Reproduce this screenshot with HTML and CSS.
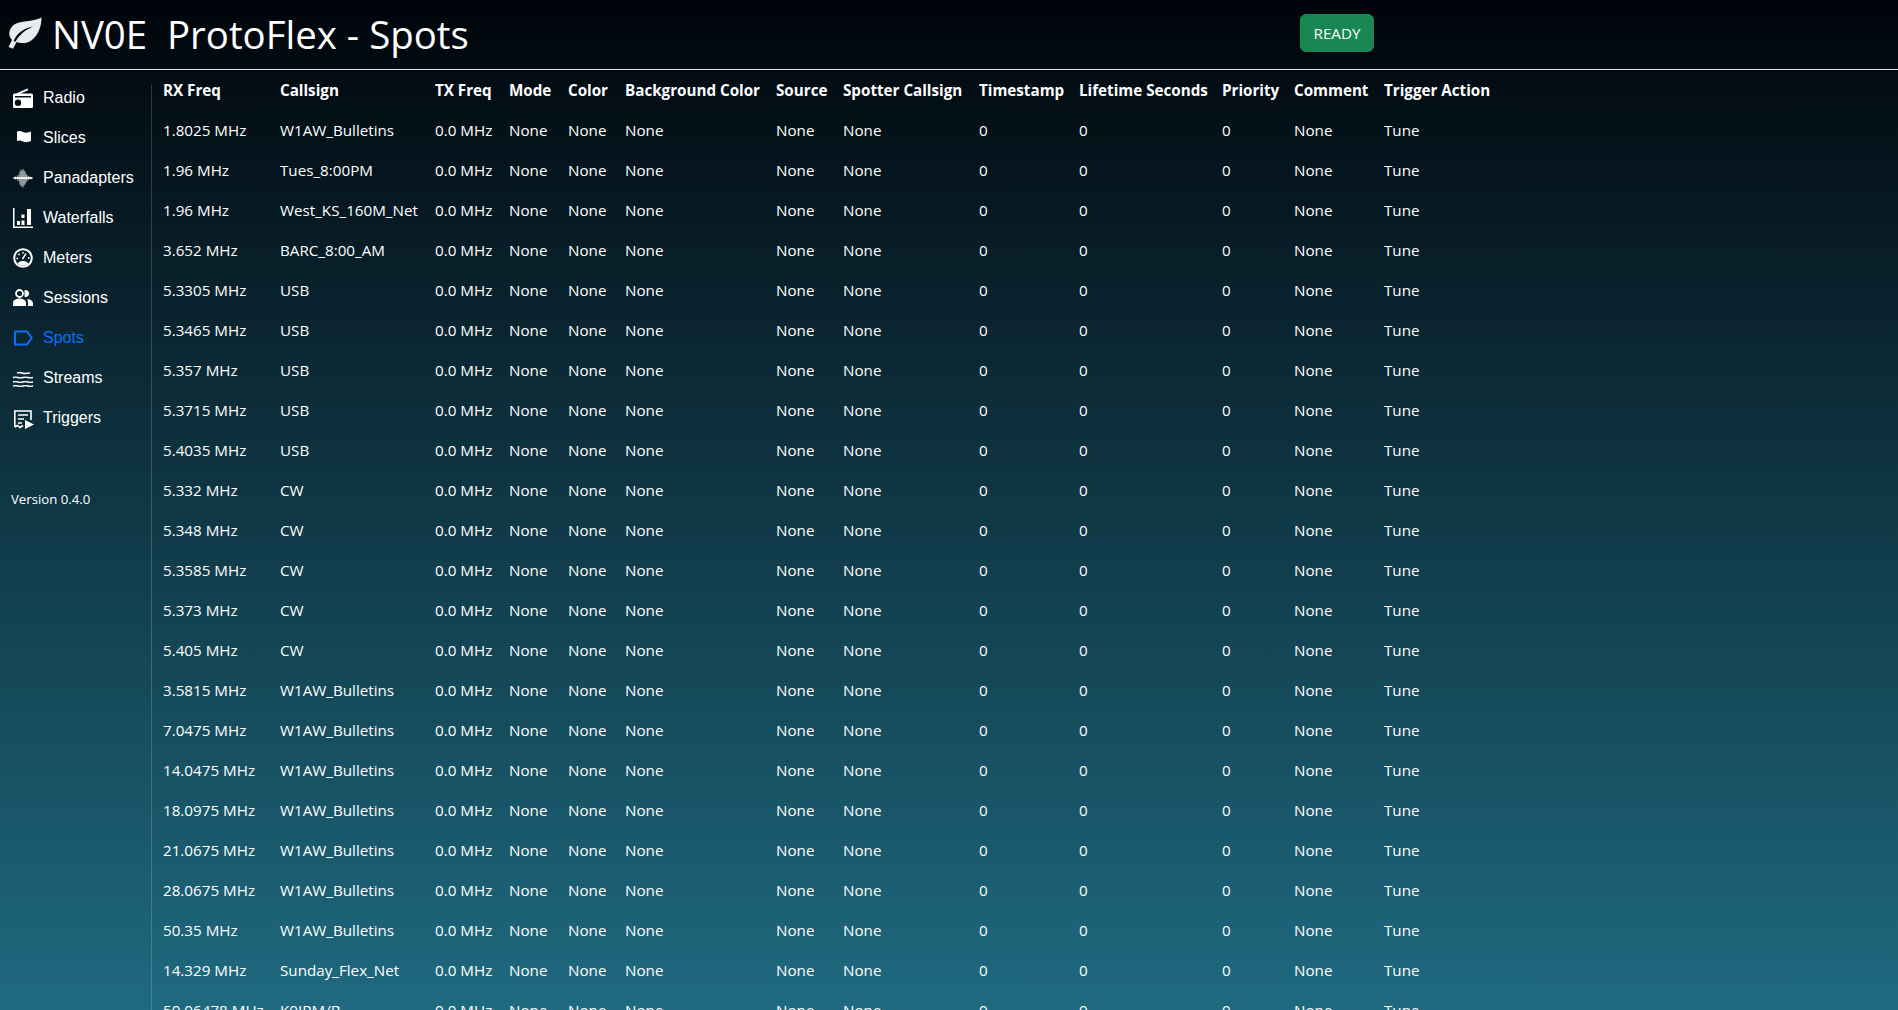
FILE: index.html
```html
<!DOCTYPE html>
<html lang="en">
<head>
<meta charset="utf-8">
<title>NV0E ProtoFlex - Spots</title>
<link rel="stylesheet" href="styles.css">
</head>
<body>
<div class="app">
<header class="topbar">
  <div class="brand">
    <svg class="leaf" viewBox="0 0 34 32"><path fill-rule="evenodd" d="M33.500 0.500C33.500 8 31 18.500 22.500 24C17 27.300 11.500 26 8.500 25L5 31.800L0.500 30L4 23C0 19 0.500 12 5.500 8C12 3 24 5.500 33.500 0.500ZM25 9.500C16.500 11 9.500 15.500 5.500 24L7.500 24.800C11 18 17 13 25 9.500Z" fill="#e9ecef"/></svg>
    <h1 class="title">NV0E&nbsp; ProtoFlex - Spots</h1>
  </div>
  <button class="status">READY</button>
</header>
<div class="body-row">
<nav class="sidebar">
  <ul class="nav-list">
    <li class="nav-item"><svg class="ico" viewBox="0 0 20 20"><path fill="#fff" fill-rule="evenodd" d="M1.500 5.500H3L14.500 0.500L15.200 2.200L7.500 5.500H18.500A1.500 1.500 0 0 1 20 7V18.500A1.500 1.500 0 0 1 18.500 20H1.500A1.500 1.500 0 0 1 0 18.500V7A1.500 1.500 0 0 1 1.500 5.500ZM2 8V9.500H18V8ZM5 11.500A3.200 3.200 0 1 0 5 17.900A3.200 3.200 0 0 0 5 11.500Z"/></svg><span>Radio</span></li>
    <li class="nav-item"><svg class="ico" viewBox="0 0 20 20"><path fill="#fff" d="M4 3.500C6 2.500 8 3 10 4C12 5 14 5 18 3.500V13C14 14.500 12 14.500 10 13.500C8 12.500 6 12 4 13Z"/></svg><span>Slices</span></li>
    <li class="nav-item"><svg class="ico" viewBox="0 0 20 20"><path stroke="#fff" stroke-width=".9" fill="none" opacity=".75" d="M2.500 8.500V11.500M4.500 7.500V12.500M6 6.500V13.500M7 3.500V16.500M8 1.500V18M9 3V18.500M10 1V19.500M11 2.500V17.500M12 3.500V16.500M13 5.500V14.500M14 7V13M15.500 8V12M17 8.500V11.500"/><path stroke="#fff" stroke-width="1.800" fill="none" d="M0.500 10H19.500"/></svg><span>Panadapters</span></li>
    <li class="nav-item"><svg class="ico" viewBox="0 0 20 20"><path fill="#fff" d="M0 0H1.500V18.500H20V20H0ZM4 13H7V17H4ZM8.500 6.500H11.500V10H8.500ZM8.500 12.500H11.500V17H8.500ZM14 1H18V17H14Z"/></svg><span>Waterfalls</span></li>
    <li class="nav-item"><svg class="ico" viewBox="0 0 20 20"><circle cx="10" cy="10" r="8.800" fill="none" stroke="#fff" stroke-width="2"/><path fill="#fff" d="M4.500 15.500A6 4 0 0 1 15.500 15.500A8 8 0 0 1 4.500 15.500Z"/><path stroke="#fff" stroke-width="1.500" fill="none" d="M9.500 11L13 5.500"/><circle cx="10" cy="4.800" r=".9" fill="#fff"/><circle cx="6" cy="6.500" r=".9" fill="#fff"/><circle cx="4.300" cy="10.500" r=".9" fill="#fff"/><circle cx="15.700" cy="10" r=".9" fill="#fff"/></svg><span>Meters</span></li>
    <li class="nav-item"><svg class="ico" viewBox="0 0 20 20"><circle cx="6.500" cy="5.500" r="3.500" fill="none" stroke="#fff" stroke-width="1.800"/><path fill="#fff" d="M11.500 2.200A3.500 3.500 0 1 1 11.500 8.800Z"/><path fill="#fff" d="M0 18V15C0 12 3 10.500 6.500 10.500C10 10.500 13 12 13 15V18Z"/><path fill="#fff" d="M14.500 11C18 11.500 20 13 20 15.500V18H15V14.500C15 13 14.500 12 14.500 11Z"/></svg><span>Sessions</span></li>
    <li class="nav-item active"><svg class="ico" viewBox="0 0 20 20"><path fill="none" stroke="#0d6efd" stroke-width="2" stroke-linejoin="round" d="M2 3.500H14L18.800 10L14 16.500H2Z"/></svg><span>Spots</span></li>
    <li class="nav-item"><svg class="ico" viewBox="0 0 20 20"><path fill="none" stroke="#fff" stroke-width="1.400" d="M4 5C6 4.300 7.500 4.300 9 5C11 5.700 13 5.700 17 5M0 9.500C2 9 3.500 9 5 9.500C6.500 10 8 10 10 9.500C12 9 13.500 9 15 9.500C16.500 10 18 10 20 9.500M0 14C2 13.500 3.500 13.500 5 14C6.500 14.500 8 14.500 10 14C12 13.500 13.500 13.500 15 14C16.500 14.500 18 14.500 20 14M0 18C2 17.500 3.500 17.500 5 18C6.500 18.500 8 18.500 10 18C12 17.500 13.500 17.500 15 18C16.500 18.500 18 18.500 20 18"/></svg><span>Streams</span></li>
    <li class="nav-item"><svg class="ico" viewBox="0 0 20 20"><path fill="none" stroke="#fff" stroke-width="1.600" d="M1.800 19V3H18V12M1.800 19L4.500 17.500L7 19.500L10 17.500"/><path fill="none" stroke="#fff" stroke-width="1.500" d="M5 7H15M5 11H11M5 15H9"/><path fill="#fff" d="M12 12L21 16.500L12 21Z"/></svg><span>Triggers</span></li>
  </ul>
  <p class="version">Version 0.4.0</p>
</nav>
<main class="content">
<table class="spots">
<thead><tr><th>RX Freq</th><th>Callsign</th><th>TX Freq</th><th>Mode</th><th>Color</th><th>Background Color</th><th>Source</th><th>Spotter Callsign</th><th>Timestamp</th><th>Lifetime Seconds</th><th>Priority</th><th>Comment</th><th>Trigger Action</th></tr></thead>
<tbody>
<tr><td>1.8025 MHz</td><td>W1AW_Bulletins</td><td>0.0 MHz</td><td>None</td><td>None</td><td>None</td><td>None</td><td>None</td><td>0</td><td>0</td><td>0</td><td>None</td><td>Tune</td></tr>
<tr><td>1.96 MHz</td><td>Tues_8:00PM</td><td>0.0 MHz</td><td>None</td><td>None</td><td>None</td><td>None</td><td>None</td><td>0</td><td>0</td><td>0</td><td>None</td><td>Tune</td></tr>
<tr><td>1.96 MHz</td><td>West_KS_160M_Net</td><td>0.0 MHz</td><td>None</td><td>None</td><td>None</td><td>None</td><td>None</td><td>0</td><td>0</td><td>0</td><td>None</td><td>Tune</td></tr>
<tr><td>3.652 MHz</td><td>BARC_8:00_AM</td><td>0.0 MHz</td><td>None</td><td>None</td><td>None</td><td>None</td><td>None</td><td>0</td><td>0</td><td>0</td><td>None</td><td>Tune</td></tr>
<tr><td>5.3305 MHz</td><td>USB</td><td>0.0 MHz</td><td>None</td><td>None</td><td>None</td><td>None</td><td>None</td><td>0</td><td>0</td><td>0</td><td>None</td><td>Tune</td></tr>
<tr><td>5.3465 MHz</td><td>USB</td><td>0.0 MHz</td><td>None</td><td>None</td><td>None</td><td>None</td><td>None</td><td>0</td><td>0</td><td>0</td><td>None</td><td>Tune</td></tr>
<tr><td>5.357 MHz</td><td>USB</td><td>0.0 MHz</td><td>None</td><td>None</td><td>None</td><td>None</td><td>None</td><td>0</td><td>0</td><td>0</td><td>None</td><td>Tune</td></tr>
<tr><td>5.3715 MHz</td><td>USB</td><td>0.0 MHz</td><td>None</td><td>None</td><td>None</td><td>None</td><td>None</td><td>0</td><td>0</td><td>0</td><td>None</td><td>Tune</td></tr>
<tr><td>5.4035 MHz</td><td>USB</td><td>0.0 MHz</td><td>None</td><td>None</td><td>None</td><td>None</td><td>None</td><td>0</td><td>0</td><td>0</td><td>None</td><td>Tune</td></tr>
<tr><td>5.332 MHz</td><td>CW</td><td>0.0 MHz</td><td>None</td><td>None</td><td>None</td><td>None</td><td>None</td><td>0</td><td>0</td><td>0</td><td>None</td><td>Tune</td></tr>
<tr><td>5.348 MHz</td><td>CW</td><td>0.0 MHz</td><td>None</td><td>None</td><td>None</td><td>None</td><td>None</td><td>0</td><td>0</td><td>0</td><td>None</td><td>Tune</td></tr>
<tr><td>5.3585 MHz</td><td>CW</td><td>0.0 MHz</td><td>None</td><td>None</td><td>None</td><td>None</td><td>None</td><td>0</td><td>0</td><td>0</td><td>None</td><td>Tune</td></tr>
<tr><td>5.373 MHz</td><td>CW</td><td>0.0 MHz</td><td>None</td><td>None</td><td>None</td><td>None</td><td>None</td><td>0</td><td>0</td><td>0</td><td>None</td><td>Tune</td></tr>
<tr><td>5.405 MHz</td><td>CW</td><td>0.0 MHz</td><td>None</td><td>None</td><td>None</td><td>None</td><td>None</td><td>0</td><td>0</td><td>0</td><td>None</td><td>Tune</td></tr>
<tr><td>3.5815 MHz</td><td>W1AW_Bulletins</td><td>0.0 MHz</td><td>None</td><td>None</td><td>None</td><td>None</td><td>None</td><td>0</td><td>0</td><td>0</td><td>None</td><td>Tune</td></tr>
<tr><td>7.0475 MHz</td><td>W1AW_Bulletins</td><td>0.0 MHz</td><td>None</td><td>None</td><td>None</td><td>None</td><td>None</td><td>0</td><td>0</td><td>0</td><td>None</td><td>Tune</td></tr>
<tr><td>14.0475 MHz</td><td>W1AW_Bulletins</td><td>0.0 MHz</td><td>None</td><td>None</td><td>None</td><td>None</td><td>None</td><td>0</td><td>0</td><td>0</td><td>None</td><td>Tune</td></tr>
<tr><td>18.0975 MHz</td><td>W1AW_Bulletins</td><td>0.0 MHz</td><td>None</td><td>None</td><td>None</td><td>None</td><td>None</td><td>0</td><td>0</td><td>0</td><td>None</td><td>Tune</td></tr>
<tr><td>21.0675 MHz</td><td>W1AW_Bulletins</td><td>0.0 MHz</td><td>None</td><td>None</td><td>None</td><td>None</td><td>None</td><td>0</td><td>0</td><td>0</td><td>None</td><td>Tune</td></tr>
<tr><td>28.0675 MHz</td><td>W1AW_Bulletins</td><td>0.0 MHz</td><td>None</td><td>None</td><td>None</td><td>None</td><td>None</td><td>0</td><td>0</td><td>0</td><td>None</td><td>Tune</td></tr>
<tr><td>50.35 MHz</td><td>W1AW_Bulletins</td><td>0.0 MHz</td><td>None</td><td>None</td><td>None</td><td>None</td><td>None</td><td>0</td><td>0</td><td>0</td><td>None</td><td>Tune</td></tr>
<tr><td>14.329 MHz</td><td>Sunday_Flex_Net</td><td>0.0 MHz</td><td>None</td><td>None</td><td>None</td><td>None</td><td>None</td><td>0</td><td>0</td><td>0</td><td>None</td><td>Tune</td></tr>
<tr><td>50.06478 MHz</td><td>K0IRM/B</td><td>0.0 MHz</td><td>None</td><td>None</td><td>None</td><td>None</td><td>None</td><td>0</td><td>0</td><td>0</td><td>None</td><td>Tune</td></tr>
</tbody>
</table>
</main>
</div>
</div>
</body>
</html>
```

FILE: styles.css
```css
* { box-sizing: border-box; }
html, body { margin: 0; height: 100%; overflow: hidden; }
body {
  background: linear-gradient(180deg, #00040a 0%, #1f6a80 100%);
  color: #fff;
  font-family: "Open Sans", "Noto Sans", sans-serif;
  font-size: 15.2px;
}
.app { display: flex; flex-direction: column; height: 100vh; }
.topbar {
  flex: none;
  height: 70px;
  border-bottom: 1px solid #dee2e6;
  display: flex;
  align-items: center;
  padding-left: 8px;
}
.brand { display: flex; align-items: center; width: 1292px; }
.leaf { width: 34px; height: 32px; margin-right: 10px; margin-bottom: 2px; }
.title { margin: 0; font-size: 38.4px; font-weight: 400; line-height: 1.2; white-space: nowrap; }
.status {
  width: 74px; height: 38px;
  margin-top: -3px;
  background: #198754;
  border: 1px solid #198754;
  border-radius: 6px;
  color: #fff;
  font: inherit;
  font-size: 15.2px;
  padding: 0;
}
.body-row { flex: 1; display: flex; min-height: 0; padding-top: 7px; }
.sidebar { flex: none; width: 151px; padding: 1px 0 0 13px; }
.nav-list { list-style: none; margin: 0; padding: 0; font-family: "Liberation Sans", Arial, sans-serif; font-size: 16px; }
.nav-item { display: flex; align-items: center; gap: 10px; height: 40px; white-space: nowrap; }
.nav-item.active { color: #0d6efd; }
.ico { width: 20px; height: 20px; flex: none; overflow: visible; }
.version { margin: 41px 0 0 -2px; font-family: "Open Sans", sans-serif; font-size: 13.2px; line-height: 40px; }
.content { flex: 1; min-width: 0; overflow: hidden; position: relative; padding: 3px 0 0 4px; }
.content::before { content: ""; position: absolute; left: 0; top: 8px; bottom: 0; width: 1px; background: rgba(255,255,255,.18); }
.spots { border-collapse: collapse; table-layout: fixed; width: 1252px; }
.spots th, .spots td { padding: 0 8px; height: 40px; text-align: left; white-space: nowrap; font-weight: 400; }
.spots th { font-weight: 700; height: 30px; padding-bottom: 10px; }
.spots th:nth-child(1) { width: 117px; }
.spots th:nth-child(2) { width: 155px; }
.spots th:nth-child(3) { width: 74px; }
.spots th:nth-child(4) { width: 59px; }
.spots th:nth-child(5) { width: 57px; }
.spots th:nth-child(6) { width: 151px; }
.spots th:nth-child(7) { width: 67px; }
.spots th:nth-child(8) { width: 136px; }
.spots th:nth-child(9) { width: 100px; }
.spots th:nth-child(10) { width: 143px; }
.spots th:nth-child(11) { width: 72px; }
.spots th:nth-child(12) { width: 90px; }
.spots th:nth-child(13) { width: 131px; }
```
